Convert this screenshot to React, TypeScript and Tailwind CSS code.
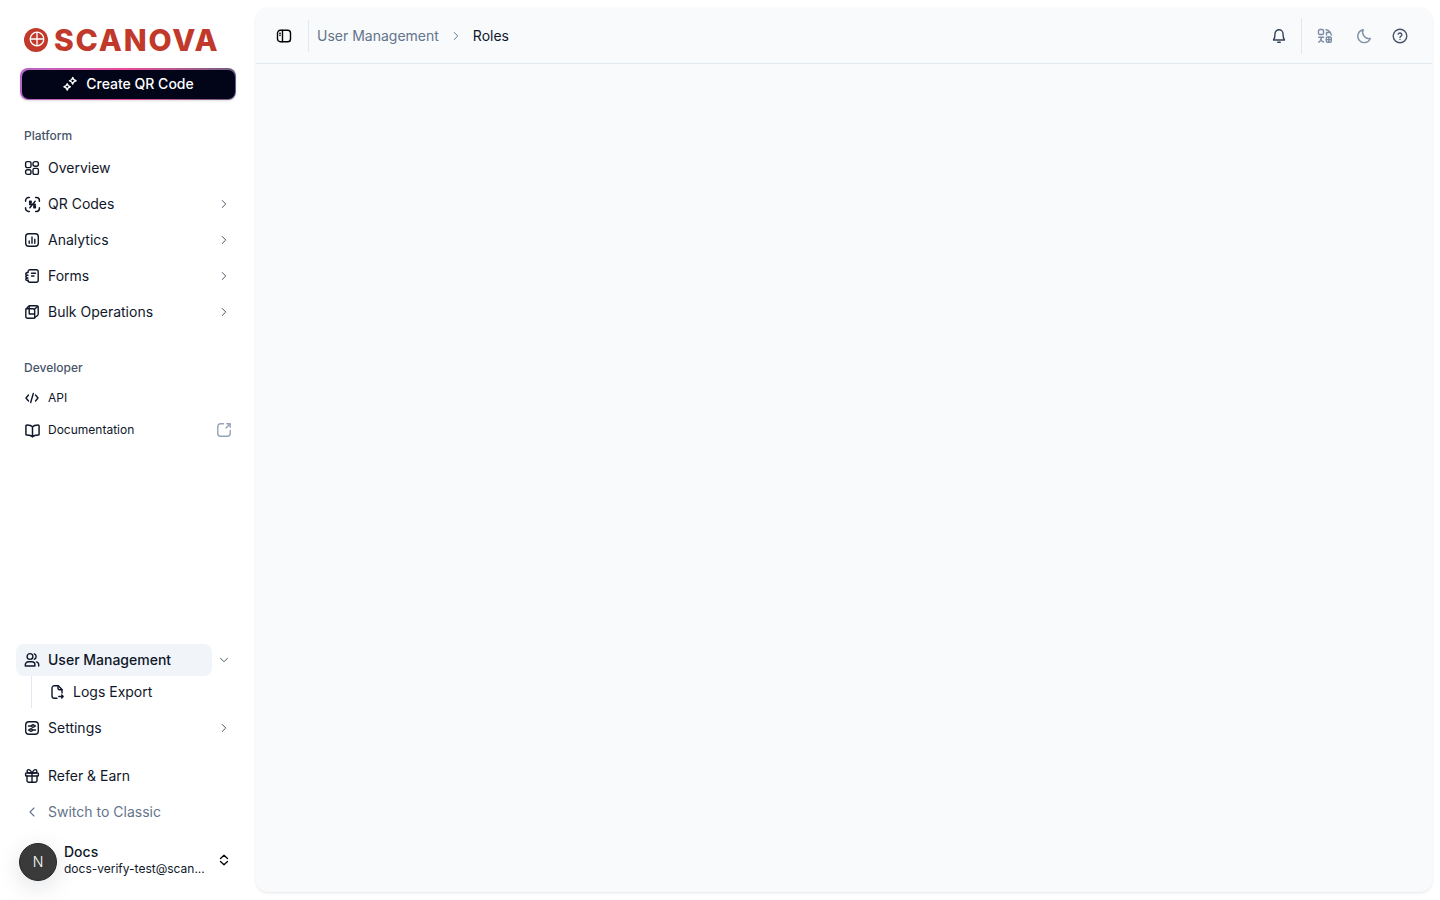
import type { ReactNode } from "react";
import { ChevronDown, ChevronLeft, ChevronRight } from "lucide-react";

function Icon({ children, size = 16, className = "" }: { children: ReactNode; size?: number; className?: string }) {
  return (
    <svg
      width={size}
      height={size}
      viewBox="0 0 16 16"
      fill="none"
      stroke="currentColor"
      strokeWidth={1.4}
      strokeLinecap="round"
      strokeLinejoin="round"
      className={`shrink-0 ${className}`}
    >
      {children}
    </svg>
  );
}

const OverviewIcon = () => (
  <Icon>
    <rect x="1.600" y="1.600" width="5.400" height="6" rx="1.500" />
    <rect x="9" y="1.600" width="5.400" height="4.600" rx="2" />
    <rect x="1.600" y="9.800" width="5.400" height="4.600" rx="2" />
    <rect x="9" y="8.400" width="5.400" height="6" rx="1.500" />
  </Icon>
);

const QrIcon = () => (
  <Icon size={17}>
    <path d="M1.500 5V4.200A2.700 2.700 0 0 1 4.200 1.500H5M11 1.500h.8a2.700 2.700 0 0 1 2.700 2.700V5M14.500 11v.8a2.700 2.700 0 0 1-2.700 2.700H11M5 14.500h-.8a2.700 2.700 0 0 1-2.700-2.700V11" />
    <path d="M5.300 5h1.400v1.500H5.300zM9.300 9.500h1.400V11H9.300zM10.500 5 5.500 11M9 8h1.700M5.300 8H7" />
  </Icon>
);

const AnalyticsIcon = () => (
  <Icon>
    <rect x="1.700" y="1.700" width="12.600" height="12.600" rx="3" />
    <path d="M5.200 11.300V9M8 11.300V5M10.800 11.300V7.300" />
  </Icon>
);

const FormsIcon = () => (
  <Icon>
    <path d="M4 4V3.800A2 2 0 0 1 6 1.800h6.200a2 2 0 0 1 2 2v8.400a2 2 0 0 1-2 2H6a2 2 0 0 1-2-2V12" />
    <path d="M4 4.500c-1.500 0-2.200.6-2.200 1.400S2.800 7.200 4 7.200c-1.300 0-2.200.6-2.200 1.400S2.800 10 4 10c-1.300 0-2.200.5-2.200 1.300S2.800 12.500 4 12.500" />
    <path d="M7.500 5.200h4M7.500 8h2.500" />
  </Icon>
);

const BulkIcon = () => (
  <Icon>
    <path d="M5.800 1.700h6.400a2 2 0 0 1 2 2v6.400a2 2 0 0 1-1 1.700l-2.600 2a2 2 0 0 1-1.200.4H3.800a2 2 0 0 1-2-2V6a2 2 0 0 1 .6-1.400l2.200-2.400a2 2 0 0 1 1.200-.5z" />
    <path d="M2.400 4.800h6.400a1.900 1.900 0 0 1 1.900 1.900v7.400M10.400 5.200l3.500-3M5.200 2.200v7.500M5.200 10h5.500" />
  </Icon>
);

const CodeIcon = () => (
  <Icon>
    <path d="M4.500 5 2 8l2.500 3M11.500 5 14 8l-2.500 3M9.300 3.500 6.700 12.500" />
  </Icon>
);

const BookIcon = () => (
  <Icon size={17}>
    <path d="M8 4.500C7 3.300 5.500 2.800 2.800 2.800a1 1 0 0 0-1 1v7.700a.8.8 0 0 0 .8.8c2.600 0 4.400.4 5.400 1.700 1-1.300 2.800-1.700 5.400-1.700a.8.8 0 0 0 .8-.8V3.800a1 1 0 0 0-1-1C10.500 2.800 9 3.300 8 4.500zM8 4.500V14" />
  </Icon>
);

const ExternalIcon = () => (
  <Icon className="text-[#94a3b8]">
    <path d="M7.500 1.800H4.500a2.700 2.700 0 0 0-2.700 2.700v7a2.700 2.700 0 0 0 2.700 2.700h7a2.700 2.700 0 0 0 2.700-2.700V8.500M10.800 1.800h3.400v3.400M14.200 1.800 10 6" />
  </Icon>
);

const UsersIcon = () => (
  <Icon>
    <circle cx="6" cy="4.500" r="2.900" />
    <path d="M10.300 1.800a2.900 2.900 0 0 1 0 5.400" />
    <path d="M1.300 14v-1.300a2.900 2.900 0 0 1 2.900-2.900h3.800a2.900 2.900 0 0 1 2.900 2.900V14z" />
    <path d="M12.400 9.900a2.800 2.800 0 0 1 2.300 2.800V14" />
  </Icon>
);

const LogsIcon = () => (
  <Icon>
    <path d="M8 14.300H5.300a2.300 2.300 0 0 1-2.300-2.300V4a2.300 2.300 0 0 1 2.300-2.300h4L13 5.400V9" />
    <path d="M9 1.900v2.300a1.500 1.500 0 0 0 1.500 1.500H13M9.800 12.500h4.400M12.700 11l1.500 1.500-1.500 1.500" />
  </Icon>
);

const SettingsIcon = () => (
  <Icon>
    <rect x="1.700" y="1.700" width="12.600" height="12.600" rx="3.200" />
    <path d="M4.500 6h3M10.600 6h.9M4.500 10h.9M8.500 10h3" />
    <circle cx="9" cy="6" r="1.300" />
    <circle cx="7" cy="10" r="1.300" />
  </Icon>
);

const GiftIcon = () => (
  <Icon>
    <rect x="1.600" y="5" width="12.800" height="3" rx=".8" />
    <path d="M3 8v4.500A1.700 1.700 0 0 0 4.700 14.200h6.600A1.700 1.700 0 0 0 13 12.500V8M8 5v9.200" />
    <path d="M8 5C7 3 6 1.600 4.800 1.600a1.700 1.700 0 0 0 0 3.400zM8 5c1-2 2-3.400 3.200-3.400a1.700 1.700 0 0 1 0 3.400z" />
  </Icon>
);

const SparkleIcon = () => (
  <Icon className="text-white">
    <path d="M10.800 1.500c.2 1.800 1 2.600 3.200 3.200-2.200.6-3 1.400-3.400 3.300-.4-1.900-1.200-2.700-3.100-3.100 1.900-.5 2.800-1.400 3.300-3.400z" />
    <path d="M5.300 7.800c.3 1.700 1 2.500 3 3-2 .5-2.700 1.300-3.100 3.200-.4-1.900-1.200-2.700-3.200-3.200 2-.4 2.800-1.200 3.300-3z" />
  </Icon>
);

const PanelIcon = () => (
  <Icon>
    <rect x="1.500" y="2.300" width="13" height="11.400" rx="2.800" />
    <path d="M6.500 2.300v11.400M3.800 5.200h.4M3.800 7.200h.4" />
  </Icon>
);

const BellIcon = () => (
  <Icon>
    <path d="M8 1.800a4 4 0 0 0-4 4c0 3.500-.7 5.300-1.500 6.200h11c-.8-.9-1.500-2.700-1.500-6.200a4 4 0 0 0-4-4z" />
    <path d="M6.800 14.200h2.400" strokeWidth={1.600} />
  </Icon>
);

const TranslateIcon = () => (
  <Icon>
    <rect x="1.500" y="1.500" width="5" height="5" rx="1.300" />
    <path d="M9 1.700a6.500 6.500 0 0 1 5.300 5.300M9.500 7V4.500h2.300" />
    <path d="M1.800 9.300h4.900M4.500 9.300c0 2.200-1 3.800-2.800 4.800M3.500 11.500c.8 1.300 1.700 2 3 2.500" />
    <rect x="9.300" y="9" width="5" height="5.300" rx="1.300" />
    <path d="M9.300 11.600h5M11.800 9v5.300" />
  </Icon>
);

const MoonIcon = () => (
  <Icon>
    <path d="M7.200 1.700a6.500 6.500 0 1 0 7.100 8.800 6.400 6.400 0 0 1-7.100-8.800z" />
  </Icon>
);

const HelpIcon = () => (
  <Icon>
    <circle cx="8" cy="8" r="6.800" />
    <path d="M6.100 6.100a2 2 0 0 1 3.800.7c0 1.200-1.900 1.700-1.900 2.600M8 11.500h.01" />
  </Icon>
);

const UpDownIcon = () => (
  <Icon size={14}>
    <path d="M4 6.300 8 2.600l4 3.700M4 9.700l4 3.700 4-3.700" strokeWidth={1.500} />
  </Icon>
);

const chevron = <ChevronRight size={14} strokeWidth={1.7} className="text-[#475569]" />;

function NavRow({ icon, label, arrow = true }: { icon: ReactNode; label: string; arrow?: boolean }) {
  return (
    <div className="flex h-9 items-center justify-between pl-2 pr-[5px] text-[#0f172a]">
      <div className="flex items-center gap-2 text-sm">
        <span className="flex w-4 justify-center">{icon}</span>
        <span>{label}</span>
      </div>
      {arrow && chevron}
    </div>
  );
}

function Sidebar() {
  return (
    <aside className="flex h-full w-[256px] shrink-0 flex-col pl-4 pr-[20px] pt-4">
      {/* Logo */}
      <div className="flex h-[40px] items-center gap-[6px] pl-2 pt-[8px]">
        <svg width="24" height="24" viewBox="0 0 24 24" className="shrink-0">
          <circle cx="12" cy="12" r="12" fill="#c0392b" />
          <circle cx="13" cy="11" r="6.800" fill="none" stroke="#fff" strokeWidth="1.300" />
          <path d="M13 4v14M6 11h14" stroke="#fff" strokeWidth="1.300" />
        </svg>
        <span className="text-[30px] font-extrabold leading-none tracking-[1.8px] text-[#c0392b]">SCANOVA</span>
      </div>

      {/* CTA, gradient border */}
      <div className="ml-1 mt-3 h-8 w-[216px] rounded-lg bg-gradient-to-r from-[#b565c9] via-[#ec4899] to-[#6b5d80] p-[1.5px] shadow-sm">
        <div className="flex h-full items-center justify-center gap-2 rounded-[7px] bg-[#020418] text-sm font-medium text-white">
          <SparkleIcon />
          Create QR Code
        </div>
      </div>

      <div className="mt-[28px] px-2 text-xs font-medium leading-4 text-[#475569]">Platform</div>
      <nav className="mt-[6px] flex flex-col">
        <NavRow icon={<OverviewIcon />} label="Overview" arrow={false} />
        <NavRow icon={<QrIcon />} label="QR Codes" />
        <NavRow icon={<AnalyticsIcon />} label="Analytics" />
        <NavRow icon={<FormsIcon />} label="Forms" />
        <NavRow icon={<BulkIcon />} label="Bulk Operations" />
      </nav>

      <div className="mt-[30px] px-2 text-xs font-medium leading-4 text-[#475569]">Developer</div>
      <div className="mt-[6px] flex flex-col text-xs text-[#0f172a]">
        <div className="flex h-8 items-center gap-2 pl-2">
          <CodeIcon />
          API
        </div>
        <div className="flex h-8 items-center justify-between pl-2 pr-[4px]">
          <div className="flex items-center gap-2">
            <span className="flex w-4 justify-center">
              <BookIcon />
            </span>
            Documentation
          </div>
          <ExternalIcon />
        </div>
      </div>

      {/* Bottom group */}
      <div className="mt-auto flex flex-col pb-[10px]">
        <div className="flex items-center justify-between pr-[5px]">
          <div className="flex h-8 w-[196px] items-center gap-2 rounded-lg bg-[#f1f5f9] pl-2 text-sm font-medium text-[#0f172a]">
            <UsersIcon />
            User Management
          </div>
          <ChevronDown size={14} strokeWidth={1.7} className="text-[#475569]" />
        </div>
        <div className="ml-[15px] border-l border-[#e2e8f0] pl-[17px]">
          <div className="flex h-8 items-center gap-2 text-sm text-[#0f172a]">
            <LogsIcon />
            Logs Export
          </div>
        </div>
        <div className="mt-[2px]">
          <NavRow icon={<SettingsIcon />} label="Settings" />
        </div>
        <div className="mt-3">
          <NavRow icon={<GiftIcon />} label="Refer & Earn" arrow={false} />
        </div>
        <div className="flex h-9 items-center gap-2 pl-2 text-sm text-[#64748b]">
          <ChevronLeft size={16} strokeWidth={1.7} />
          Switch to Classic
        </div>

        {/* User */}
        <div className="mt-[2px] flex h-[58px] items-center pb-[2px] pl-[3px] pr-[5px]">
          <div className="mt-1 flex h-[38px] w-[38px] shrink-0 items-center justify-center rounded-full border border-[#27272a] bg-[#3a3a3a] text-sm font-light text-white shadow-[0_6px_24px_rgba(15,23,42,0.12)]">
            N
          </div>
          <div className="ml-[7px] flex min-w-0 flex-1 flex-col">
            <span className="text-sm font-medium leading-4 text-[#0f172a]">Docs</span>
            <span className="mt-[1px] truncate text-xs leading-4 text-[#0f172a]">docs-verify-test@scan...</span>
          </div>
          <UpDownIcon />
        </div>
      </div>
    </aside>
  );
}

function Topbar() {
  return (
    <header className="flex h-14 items-center border-b border-[#e2e8f0] pl-[20px] pr-[24px]">
      <PanelIcon />
      <div className="ml-[16px] h-8 w-px bg-[#e2e8f0]" />
      <div className="ml-2 flex items-center text-sm">
        <span className="text-[#64748b]">User Management</span>
        <ChevronRight size={14} strokeWidth={1.7} className="mx-[10px] text-[#64748b]" />
        <span className="text-[#0f172a]">Roles</span>
      </div>
      <div className="ml-auto flex items-center">
        <span className="text-[#334155]">
          <BellIcon />
        </span>
        <div className="ml-[14px] h-9 w-px bg-[#e2e8f0]" />
        <span className="ml-[15px] text-[#7c8ba1]">
          <TranslateIcon />
        </span>
        <span className="ml-[23px] text-[#8392a7]">
          <MoonIcon />
        </span>
        <span className="ml-[20px] text-[#475569]">
          <HelpIcon />
        </span>
      </div>
    </header>
  );
}

export default function App() {
  return (
    <div className="flex h-[900px] w-full overflow-hidden bg-white font-['Inter',sans-serif]">
      <Sidebar />
      <div className="mb-2 mr-2 mt-2 flex-1 rounded-xl bg-[#f8fafc] shadow-[0_1px_3px_rgba(15,23,42,0.1)]">
        <Topbar />
      </div>
    </div>
  );
}
